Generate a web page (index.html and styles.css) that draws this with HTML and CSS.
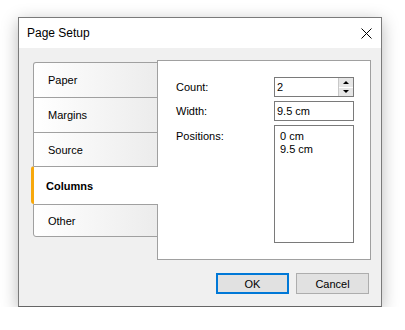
FILE: index.html
```html
<!DOCTYPE html>
<html lang="en">
<head>
    <meta charset="UTF-8">
    <title>Page Setup</title>
    <link rel="stylesheet" href="styles.css">
</head>
<body>
    <div class="window">
        <div class="titlebar">
            <span class="title">Page Setup</span>
            <svg class="close" width="11" height="11" viewBox="0 0 11 11">
                <path d="M0.5 0.5 L10.5 10.5 M10.5 0.5 L0.5 10.5" stroke="#000" stroke-width="1" fill="none"/>
            </svg>
        </div>

        <div class="content">
            <div class="main">
                <ul class="tabs">
                    <li class="tab first">Paper</li>
                    <li class="tab">Margins</li>
                    <li class="tab short">Source</li>
                    <li class="tab current">Columns</li>
                    <li class="tab last">Other</li>
                </ul>

                <div class="panel">
                    <div class="form">
                        <label class="label">Count:</label>
                        <div class="field spin">
                            <span class="value">2</span>
                            <div class="spinner">
                                <span class="up"><i></i></span>
                                <span class="down"><i></i></span>
                            </div>
                        </div>

                        <label class="label">Width:</label>
                        <div class="field"><span class="value">9.5 cm</span></div>

                        <label class="label top">Positions:</label>
                        <ul class="list">
                            <li>0 cm</li>
                            <li>9.5 cm</li>
                        </ul>
                    </div>
                </div>
            </div>

            <div class="buttons">
                <button class="btn default">OK</button>
                <button class="btn">Cancel</button>
            </div>
        </div>
    </div>
</body>
</html>
```

FILE: styles.css
```css
* {
    margin: 0;
    padding: 0;
    box-sizing: border-box;
}

li {
    list-style: none;
}

body {
    background-color: #fff;
    font-family: "Liberation Sans", Arial, sans-serif;
    font-size: 11px;
    color: #000;
}

.window {
    width: 364px;
    height: 290px;
    margin: 17px 0 0 18px;
    border: 1px solid #7a7a7a;
    border-bottom-color: #666;
    background-color: #f0f0f0;
    box-shadow: 0 4px 16px rgba(0, 0, 0, 0.28);
}

.titlebar {
    height: 30px;
    background-color: #fff;
    display: flex;
    align-items: center;
    justify-content: space-between;
    padding: 0 9px 0 8px;
}

.title {
    font-size: 12px;
}

.close {
    display: block;
}

.content {
    padding: 12px 10px 0 14px;
}

.main {
    display: flex;
    align-items: flex-start;
}

.tabs {
    width: 125px;
    margin-top: 2px;
}

.tab {
    height: 35px;
    display: flex;
    align-items: center;
    padding-left: 14px;
    border: 1px solid #a0a0a0;
    border-bottom: none;
    background: linear-gradient(to right, #fff, #ececec);
}

.tab.first {
    border-top-left-radius: 3px;
}

.tab.short {
    height: 34px;
}

.tab.current {
    position: relative;
    z-index: 1;
    height: 38px;
    width: 127px;
    margin-left: -2px;
    padding-left: 12px;
    border-left: 3px solid #f7a80c;
    border-right: none;
    border-top-left-radius: 3px;
    border-bottom-left-radius: 3px;
    background: #fff;
    font-weight: bold;
}

.tab.last {
    height: 33px;
    border-bottom: 1px solid #a0a0a0;
    border-bottom-left-radius: 3px;
}

.panel {
    width: 214px;
    height: 200px;
    margin-left: -1px;
    border: 1px solid #a0a0a0;
    background-color: #fff;
    padding: 16px 0 0 18px;
}

.form {
    display: grid;
    grid-template-columns: 98px 80px;
    row-gap: 4px;
}

.label {
    display: flex;
    align-items: center;
}

.label.top {
    align-items: flex-start;
    padding-top: 5px;
}

.field {
    height: 20px;
    border: 1px solid #7a7a7a;
    display: flex;
    align-items: center;
    padding-left: 2px;
}

.field.spin {
    justify-content: space-between;
    padding-right: 0;
}

.spinner {
    width: 15px;
    height: 18px;
    display: flex;
    flex-direction: column;
    border-left: 1px solid #c8c8c8;
}

.spinner span {
    flex: 1;
    background-color: #e6e6e6;
    display: flex;
    align-items: center;
    justify-content: center;
}

.spinner .up {
    border-bottom: 1px solid #fff;
}

.spinner .up i {
    border-left: 3px solid transparent;
    border-right: 3px solid transparent;
    border-bottom: 3px solid #000;
}

.spinner .down i {
    border-left: 3px solid transparent;
    border-right: 3px solid transparent;
    border-top: 3px solid #000;
}

.list {
    height: 118px;
    border: 1px solid #7a7a7a;
    padding: 4px 5px;
    line-height: 13px;
}

.buttons {
    display: flex;
    justify-content: flex-end;
    gap: 7px;
    margin: 13px 2px 0 0;
}

.btn {
    width: 73px;
    height: 21px;
    border: 1px solid #adadad;
    background-color: #e1e1e1;
    font-family: "Liberation Sans", Arial, sans-serif;
    font-size: 11px;
    color: #000;
}

.btn.default {
    border: 2px solid #0078d7;
}
```
